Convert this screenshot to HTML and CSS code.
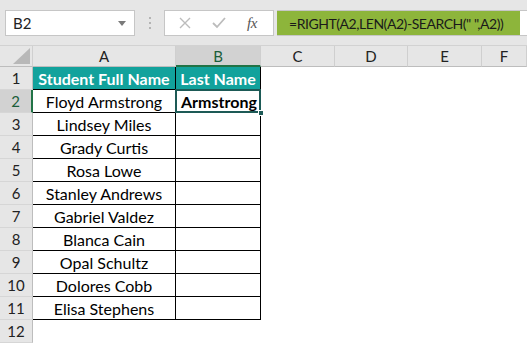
FILE: index.html
```html
<!DOCTYPE html>
<html>
<head>
<meta charset="utf-8">
<link rel="stylesheet" href="styles.css">
</head>
<body>
<div class="topbar">
  <div class="namebox"><span>B2</span><svg class="dd" width="8" height="5" viewBox="0 0 8 5"><path d="M0 0 H8 L4 5 Z" fill="#7a7a7a"/></svg></div>
  <div class="dots"><svg width="4" height="12" viewBox="0 0 4 12"><rect x="1" y="0" width="2" height="2" fill="#b4b4b4"/><rect x="1" y="5" width="2" height="2" fill="#b4b4b4"/><rect x="1" y="10" width="2" height="2" fill="#b4b4b4"/></svg></div>
  <div class="controls">
    <svg class="ico" width="12" height="12" viewBox="0 0 12 12"><path d="M1 1 L11 11 M11 1 L1 11" stroke="#bcbcbc" stroke-width="1.4" fill="none"/></svg>
    <svg class="ico" width="14" height="12" viewBox="0 0 14 12"><path d="M1 6 L5 10 L13 1" stroke="#bcbcbc" stroke-width="1.8" fill="none"/></svg>
    <span class="fx">fx</span>
  </div>
  <div class="formula"><span class="ftext">=RIGHT(A2,LEN(A2)-SEARCH(" ",A2))</span></div>
</div>
<div class="sheet">
  <div class="corner"><svg width="17" height="16" viewBox="0 0 17 16"><path d="M17 0 V16 H0 Z" fill="#b8b8b8"/></svg></div>
  <div class="ch">A</div>
  <div class="ch chsel">B</div>
  <div class="ch">C</div>
  <div class="ch">D</div>
  <div class="ch">E</div>
  <div class="ch">F</div>

  <div class="rh">1</div><div class="cell th">Student Full Name</div><div class="cell th">Last Name</div><div></div><div></div><div></div><div></div>
  <div class="rh rhsel">2</div><div class="cell">Floyd Armstrong</div><div class="cell sel">Armstrong<span class="handle"></span></div><div></div><div></div><div></div><div></div>
  <div class="rh">3</div><div class="cell">Lindsey Miles</div><div class="cell"></div><div></div><div></div><div></div><div></div>
  <div class="rh">4</div><div class="cell">Grady Curtis</div><div class="cell"></div><div></div><div></div><div></div><div></div>
  <div class="rh">5</div><div class="cell">Rosa Lowe</div><div class="cell"></div><div></div><div></div><div></div><div></div>
  <div class="rh">6</div><div class="cell">Stanley Andrews</div><div class="cell"></div><div></div><div></div><div></div><div></div>
  <div class="rh">7</div><div class="cell">Gabriel Valdez</div><div class="cell"></div><div></div><div></div><div></div><div></div>
  <div class="rh">8</div><div class="cell">Blanca Cain</div><div class="cell"></div><div></div><div></div><div></div><div></div>
  <div class="rh">9</div><div class="cell">Opal Schultz</div><div class="cell"></div><div></div><div></div><div></div><div></div>
  <div class="rh">10</div><div class="cell">Dolores Cobb</div><div class="cell"></div><div></div><div></div><div></div><div></div>
  <div class="rh">11</div><div class="cell">Elisa Stephens</div><div class="cell"></div><div></div><div></div><div></div><div></div>
  <div class="rh">12</div><div></div><div></div><div></div><div></div><div></div><div></div>
</div>
</body>
</html>
```

FILE: styles.css
```css
* { box-sizing: border-box; }
html, body { margin: 0; padding: 0; background: #fff; }
body {
  width: 527px;
  height: 344px;
  overflow: hidden;
  font-family: Lato, "Open Sans", sans-serif;
  color: #000;
}
.topbar {
  height: 46px;
  background: #e6e6e6;
  border-bottom: 1px solid #d2d2d2;
  display: flex;
  align-items: flex-start;
  padding: 10px 0 0 5px;
}
.namebox {
  width: 130px;
  height: 26px;
  background: #fff;
  border: 1px solid #c6c6c6;
  display: flex;
  align-items: center;
  justify-content: space-between;
  padding: 0 8px 0 7px;
  font-size: 15px;
  color: #222;
}
.dots {
  width: 29px;
  height: 26px;
  display: flex;
  align-items: center;
  justify-content: center;
}
.controls {
  width: 110px;
  height: 26px;
  background: #fff;
  border: 1px solid #c6c6c6;
  display: flex;
  align-items: center;
  padding: 0 8px 0 14px;
  gap: 0;
}
.controls .ico:first-child { margin-right: 21px; }
.controls .ico:nth-child(2) { margin-right: 21px; }
.fx {
  font-family: "Liberation Serif", serif;
  font-style: italic;
  font-size: 15px;
  color: #555;
  letter-spacing: -0.5px;
}
.formula {
  margin-left: 3px;
  flex: 1;
  height: 26px;
  background: #fff;
  border-top: 1px solid #c6c6c6;
  border-bottom: 1px solid #c6c6c6;
  display: flex;
}
.ftext {
  width: 243px;
  height: 100%;
  background: #8db53b;
  font-size: 14px;
  letter-spacing: -0.45px;
  display: flex;
  align-items: center;
  padding-left: 12px;
  color: #1a1a1a;
  white-space: nowrap;
}
.sheet {
  display: grid;
  grid-template-columns: 33px 143px 85px 74px 73px 74px 45px;
  grid-template-rows: 21px repeat(12, 23px);
}
.corner {
  background: #e6e6e6;
  border-right: 1px solid #d0d0d0;
  border-bottom: 1px solid #bdbdbd;
  display: flex;
  align-items: flex-end;
  justify-content: flex-end;
  padding: 0 2px 2px 0;
}
.ch {
  background: #e6e6e6;
  border-right: 1px solid #cfcfcf;
  border-bottom: 1px solid #bdbdbd;
  display: flex;
  align-items: center;
  justify-content: center;
  font-size: 15px;
  color: #222;
}
.chsel {
  background: #d2d2d2;
  border-bottom: 2px solid #217346;
  color: #1b5e3a;
}
.rh {
  background: #e6e6e6;
  border-right: 1px solid #bdbdbd;
  border-bottom: 1px solid #d6d6d6;
  display: flex;
  align-items: center;
  justify-content: center;
  font-size: 15px;
  color: #222;
}
.rhsel {
  background: #d2d2d2;
  border-right: 2px solid #217346;
  color: #1b5e3a;
}
.cell {
  border-right: 1px solid #000;
  border-bottom: 1px solid #000;
  display: flex;
  align-items: center;
  justify-content: center;
  font-size: 16px;
  padding-top: 1px;
  white-space: nowrap;
  position: relative;
}
.th {
  background: #12a29c;
  color: #fff;
  font-weight: bold;
}
.sel {
  font-weight: bold;
  justify-content: flex-start;
  padding-left: 5px;
}
.sel::after {
  content: "";
  position: absolute;
  left: -1px;
  top: -1px;
  right: -1px;
  bottom: -1px;
  border: 2px solid #1d5a56;
  pointer-events: none;
}
.handle {
  position: absolute;
  right: -4px;
  bottom: -4px;
  width: 6px;
  height: 6px;
  background: #1d5a56;
  border: 1px solid #fff;
  z-index: 2;
}
```
